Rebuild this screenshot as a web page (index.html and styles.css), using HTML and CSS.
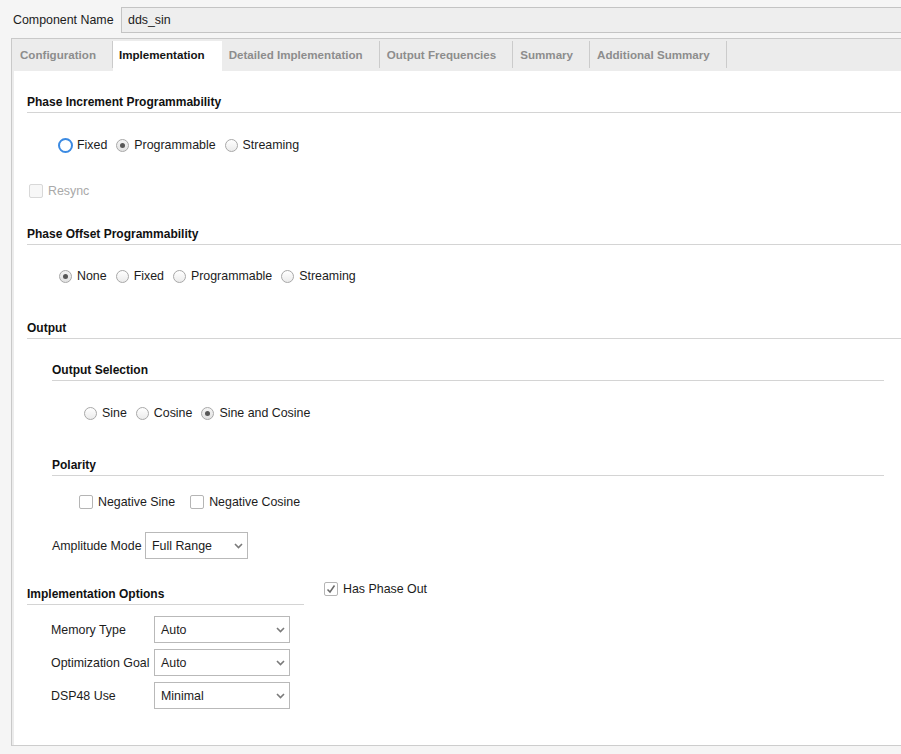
FILE: index.html
```html
<!DOCTYPE html>
<html>
<head>
<meta charset="utf-8">
<title>dds_sin</title>
<link rel="stylesheet" href="styles.css">
</head>
<body>
<div class="name-row">
  <span class="name-label">Component Name</span>
  <div class="name-input">dds_sin</div>
</div>
<div class="panel">
  <div class="tabs">
    <div class="tab first">Configuration</div>
    <div class="tab active">Implementation</div>
    <div class="tab">Detailed Implementation</div>
    <div class="tab">Output Frequencies</div>
    <div class="tab">Summary</div>
    <div class="tab">Additional Summary</div>
  </div>
  <div class="content">
    <div class="heading gap-24">Phase Increment Programmability</div>
    <div class="choices gap-22">
      <label class="choice"><span class="radio focused"></span>Fixed</label>
      <label class="choice"><span class="radio checked"></span>Programmable</label>
      <label class="choice"><span class="radio"></span>Streaming</label>
    </div>
    <div class="resync gap-26">
      <label class="choice disabled"><span class="checkbox disabled"></span>Resync</label>
    </div>

    <div class="heading gap-26">Phase Offset Programmability</div>
    <div class="choices gap-21">
      <label class="choice"><span class="radio checked"></span>None</label>
      <label class="choice"><span class="radio"></span>Fixed</label>
      <label class="choice"><span class="radio"></span>Programmable</label>
      <label class="choice"><span class="radio"></span>Streaming</label>
    </div>

    <div class="heading gap-35">Output</div>
    <div class="subsection">
      <div class="heading gap-24">Output Selection</div>
      <div class="choices gap-22">
        <label class="choice"><span class="radio"></span>Sine</label>
        <label class="choice"><span class="radio"></span>Cosine</label>
        <label class="choice"><span class="radio checked"></span>Sine and Cosine</label>
      </div>

      <div class="heading gap-35">Polarity</div>
      <div class="checks gap-16">
        <label class="check-item"><span class="checkbox"></span>Negative Sine</label>
        <label class="check-item"><span class="checkbox"></span>Negative Cosine</label>
      </div>

      <div class="field amp gap-20">
        <span class="field-label">Amplitude Mode</span>
        <div class="select">
          <span>Full Range</span>
          <svg class="chev" width="9" height="6" viewBox="0 0 9 6"><path d="M1 1 L4.5 4.5 L8 1" fill="none" stroke="#7a7a7a" stroke-width="1.6"/></svg>
        </div>
      </div>
    </div>

    <div class="impl">
      <div class="impl-left">
        <div class="heading gap-9">Implementation Options</div>
        <div class="field opt gap-11">
          <span class="field-label">Memory Type</span>
          <div class="select">
            <span>Auto</span>
            <svg class="chev" width="9" height="6" viewBox="0 0 9 6"><path d="M1 1 L4.5 4.5 L8 1" fill="none" stroke="#7a7a7a" stroke-width="1.6"/></svg>
          </div>
        </div>
        <div class="field opt gap-6">
          <span class="field-label">Optimization Goal</span>
          <div class="select">
            <span>Auto</span>
            <svg class="chev" width="9" height="6" viewBox="0 0 9 6"><path d="M1 1 L4.5 4.5 L8 1" fill="none" stroke="#7a7a7a" stroke-width="1.6"/></svg>
          </div>
        </div>
        <div class="field opt gap-6">
          <span class="field-label">DSP48 Use</span>
          <div class="select">
            <span>Minimal</span>
            <svg class="chev" width="9" height="6" viewBox="0 0 9 6"><path d="M1 1 L4.5 4.5 L8 1" fill="none" stroke="#7a7a7a" stroke-width="1.6"/></svg>
          </div>
        </div>
      </div>
      <div class="impl-right">
        <label class="check-item">
          <span class="checkbox checked"><svg width="12" height="12" viewBox="0 0 12 12"><path d="M2.5 6.5 L5 9 L9.5 2.5" fill="none" stroke="#6a6a6a" stroke-width="1.5"/></svg></span>Has Phase Out
        </label>
      </div>
    </div>
  </div>
</div>
</body>
</html>
```
FILE: styles.css
```css
html, body {
  margin: 0;
  padding: 0;
}
body {
  width: 901px;
  height: 754px;
  overflow: hidden;
  background: #f5f5f5;
  font-family: "Liberation Sans", Arial, sans-serif;
  font-size: 12.4px;
  color: #1c1c1c;
}

.name-row {
  display: flex;
  align-items: center;
  padding: 7px 0 0 13px;
}
.name-label {
  width: 108px;
  flex: none;
}
.name-input {
  flex: 1;
  height: 26px;
  box-sizing: border-box;
  border: 1px solid #c4c4c4;
  border-right: none;
  background: #eeeeee;
  padding-left: 6px;
  line-height: 24px;
}

.panel {
  margin: 5px 0 0 11px;
  border-left: 1px solid #c9c9c9;
  border-top: 1px solid #c9c9c9;
  border-bottom: 1px solid #cdcdcd;
}

.tabs {
  display: flex;
  align-items: flex-start;
  height: 32px;
  box-sizing: border-box;
  padding-top: 2px;
  background: #ececec;
}
.tab {
  height: 27px;
  line-height: 27px;
  padding: 0 16px 0 7px;
  border-right: 1px solid #cbcbcb;
  color: #8d8d8d;
  font-weight: bold;
  font-size: 11.6px;
  white-space: nowrap;
}
.tab.first {
  padding-left: 8px;
}
.tab.active {
  height: 30px;
  background: #ffffff;
  color: #141414;
  border-right: none;
  padding: 0 17px 0 6px;
}

.content {
  display: flow-root;
  background: #ffffff;
  border-left: 2px solid #ececec;
  padding: 0 0 36px 13px;
}

.heading {
  font-weight: bold;
  font-size: 12px;
  line-height: 15px;
  padding-bottom: 2px;
  border-bottom: 1px solid #d4d4d4;
  color: #111111;
}

.gap-6 { margin-top: 6px; }
.gap-9 { margin-top: 9px; }
.gap-11 { margin-top: 11px; }
.gap-16 { margin-top: 16px; }
.gap-20 { margin-top: 20px; }
.gap-21 { margin-top: 21px; }
.gap-22 { margin-top: 22px; }
.gap-24 { margin-top: 24px; }
.gap-26 { margin-top: 26px; }
.gap-35 { margin-top: 35px; }

.choices {
  display: flex;
  align-items: center;
  height: 20px;
  padding-left: 32px;
}
.choice {
  display: flex;
  align-items: center;
  gap: 5px;
  margin-right: 9px;
}
.choice.disabled {
  color: #a9a9a9;
}
.resync {
  display: flex;
  align-items: center;
  height: 20px;
  padding-left: 2px;
}

.radio {
  position: relative;
  flex: none;
  width: 13px;
  height: 13px;
  box-sizing: border-box;
  border: 1px solid #a8a8a8;
  border-radius: 50%;
  background: linear-gradient(#ffffff, #ebebeb);
}
.radio.checked {
  background: linear-gradient(#f4f4f4, #e2e2e2);
}
.radio.checked::after {
  content: "";
  position: absolute;
  left: 3px;
  top: 3px;
  width: 5px;
  height: 5px;
  border-radius: 50%;
  background: #575757;
}
.radio.focused {
  width: 15px;
  height: 15px;
  margin: 0 -1px;
  border: 2px solid #3b8ae2;
  background: #ffffff;
}

.checks {
  display: flex;
  align-items: center;
  height: 20px;
  padding-left: 27px;
}
.check-item {
  display: flex;
  align-items: center;
  gap: 5px;
  margin-right: 15px;
  height: 20px;
}
.checkbox {
  flex: none;
  display: flex;
  align-items: center;
  justify-content: center;
  width: 14px;
  height: 14px;
  box-sizing: border-box;
  border: 1px solid #b5b5b5;
  border-radius: 2px;
  background: #ffffff;
}
.checkbox.disabled {
  border-color: #d8d8d8;
  background: #f7f7f7;
}

.subsection {
  margin: 0 17px 0 25px;
}

.field {
  display: flex;
  align-items: center;
}
.field-label {
  flex: none;
}
.select {
  display: flex;
  align-items: center;
  justify-content: space-between;
  height: 27px;
  box-sizing: border-box;
  border: 1px solid #b9b9b9;
  background: #ffffff;
  padding: 0 4px 0 6px;
}
.chev {
  display: block;
}
.amp .field-label {
  width: 93px;
}
.amp .select {
  width: 103px;
}

.impl {
  display: flex;
  margin-top: 19px;
}
.impl-left {
  width: 277px;
  flex: none;
}
.impl-right {
  margin-left: 20px;
  padding-top: 1px;
}
.opt {
  padding-left: 24px;
}
.opt .field-label {
  width: 103px;
}
.opt .select {
  width: 136px;
}
```
